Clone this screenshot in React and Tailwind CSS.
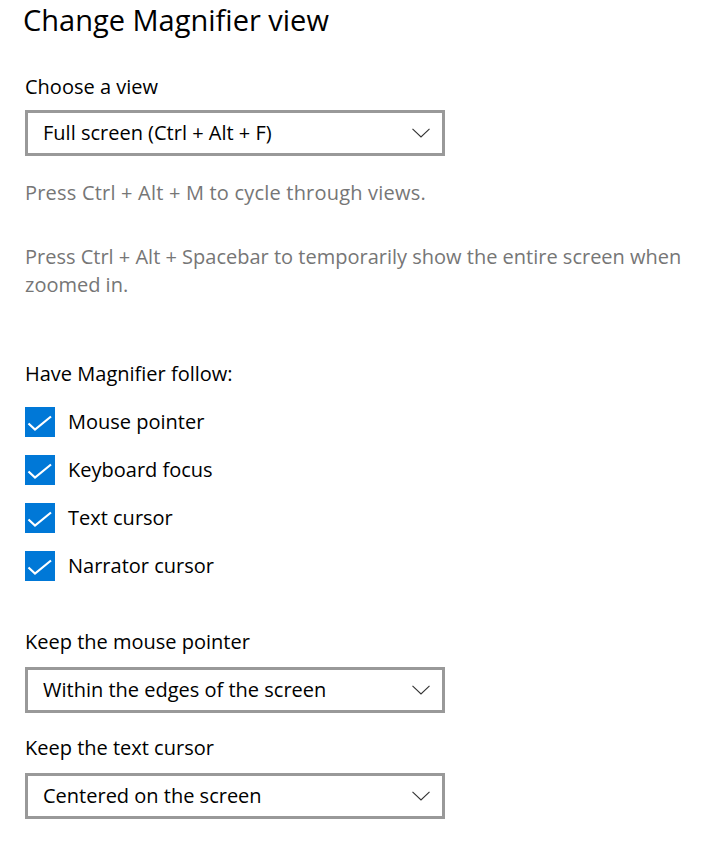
import React from "react";

function Chevron() {
  return (
    <svg width="18" height="10" viewBox="0 0 18 10" className="block">
      <path d="M0.5 0.8 L9 9 L17.5 0.8" fill="none" stroke="#333" strokeWidth="1.1" />
    </svg>
  );
}

function Dropdown({ label }) {
  return (
    <div className="w-[420px] h-[46px] border-[3px] border-[#999999] bg-white flex items-center justify-between pl-[15px] pr-[12px]">
      <span className="text-[20px] leading-[28px] text-black">{label}</span>
      <Chevron />
    </div>
  );
}

function Check({ label }) {
  return (
    <div className="flex items-center h-[30px]">
      <div className="w-[30px] h-[30px] bg-[#0078d7] flex-none">
        <svg width="30" height="30" viewBox="0 0 30 30" className="block">
          <path d="M3.5 16.5 L10 22.5 L26 9.5" fill="none" stroke="#ffffff" strokeWidth="2.2" />
        </svg>
      </div>
      <span className="ml-[13px] text-[20px] leading-[28px] text-black">{label}</span>
    </div>
  );
}

export default function App() {
  return (
    <div className="w-[719px] h-[849px] bg-white overflow-hidden font-['Open_Sans',sans-serif] pl-[25px]">
      <div className="text-[29px] leading-[40px] text-black -ml-[2px]">Change Magnifier view</div>
      <div className="mt-[33px] text-[20px] leading-[28px] text-black">Choose a view</div>
      <div className="mt-[9px]">
        <Dropdown label="Full screen (Ctrl + Alt + F)" />
      </div>
      <div className="mt-[23px] text-[20px] leading-[28px] text-[#767676] tracking-[0.2px]">
        Press Ctrl + Alt + M to cycle through views.
      </div>
      <div className="mt-[36px] w-[680px] text-[20px] leading-[28px] text-[#767676]">
        Press Ctrl + Alt + Spacebar to temporarily show the entire screen when zoomed in.
      </div>
      <div className="mt-[61px] text-[20px] leading-[28px] text-black">Have Magnifier follow:</div>
      <div className="mt-[19px] flex flex-col gap-[18px]">
        <Check label="Mouse pointer" />
        <Check label="Keyboard focus" />
        <Check label="Text cursor" />
        <Check label="Narrator cursor" />
      </div>
      <div className="mt-[47px] text-[20px] leading-[28px] text-black">Keep the mouse pointer</div>
      <div className="mt-[11px]">
        <Dropdown label="Within the edges of the screen" />
      </div>
      <div className="mt-[21px] text-[20px] leading-[28px] text-black">Keep the text cursor</div>
      <div className="mt-[11px]">
        <Dropdown label="Centered on the screen" />
      </div>
    </div>
  );
}
